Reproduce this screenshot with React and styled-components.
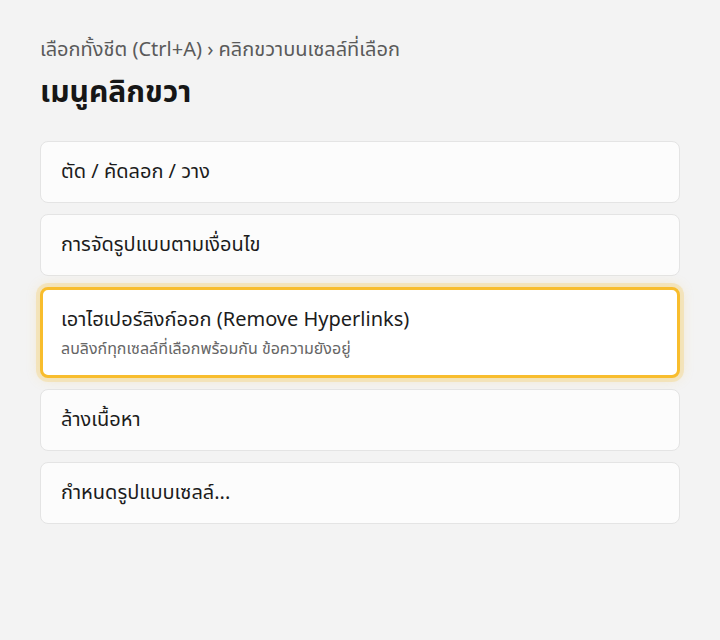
import React from 'react'
import styled, { createGlobalStyle } from 'styled-components'

const GlobalStyle = createGlobalStyle`
  html, body {
    margin: 0;
    padding: 0;
    background: #f3f3f3;
    font-family: 'Noto Sans Thai', 'Noto Sans', sans-serif;
    color: #1c1c1c;
  }
`

const items = [
  { label: 'ตัด / คัดลอก / วาง' },
  { label: 'การจัดรูปแบบตามเงื่อนไข' },
  {
    label: 'เอาไฮเปอร์ลิงก์ออก (Remove Hyperlinks)',
    hint: 'ลบลิงก์ทุกเซลล์ที่เลือกพร้อมกัน ข้อความยังอยู่',
    active: true,
  },
  { label: 'ล้างเนื้อหา' },
  { label: 'กำหนดรูปแบบเซลล์...' },
]

const App = () => {
  return (
    <>
      <GlobalStyle />
      <Page>
        <Crumb>เลือกทั้งชีต (Ctrl+A) › คลิกขวาบนเซลล์ที่เลือก</Crumb>
        <Title>เมนูคลิกขวา</Title>
        <MenuList>
          {items.map((it) => (
            <MenuItem key={it.label} $active={it.active}>
              <ItemLabel>{it.label}</ItemLabel>
              {it.hint && <ItemHint>{it.hint}</ItemHint>}
            </MenuItem>
          ))}
        </MenuList>
      </Page>
    </>
  )
}

const Page = styled.div`
  padding: 36px 40px 40px;
`

const Crumb = styled.div`
  font-size: 20px;
  color: #5a5a5a;
  line-height: 28px;
`

const Title = styled.h1`
  margin: 11px 0 0;
  font-size: 30px;
  font-weight: 700;
  color: #161616;
  line-height: 36px;
`

const MenuList = styled.div`
  display: flex;
  flex-direction: column;
  gap: 11px;
  margin-top: 30px;
`

const MenuItem = styled.div`
  display: flex;
  flex-direction: column;
  justify-content: center;
  gap: 6px;
  min-height: ${(p) => (p.$active ? '85px' : '60px')};
  padding: 0 ${(p) => (p.$active ? '18px' : '20px')};
  background: ${(p) => (p.$active ? '#ffffff' : '#fcfcfc')};
  border: ${(p) => (p.$active ? '3px solid #f8bd2d' : '1px solid #e4e4e4')};
  border-radius: 8px;
  box-shadow: ${(p) =>
    p.$active ? '0 0 0 4px rgba(248, 189, 45, 0.22), 0 0 14px rgba(248, 189, 45, 0.25)' : 'none'};
`

const ItemLabel = styled.div`
  font-size: 20px;
  color: #1c1c1c;
  line-height: 26px;
`

const ItemHint = styled.div`
  font-size: 16px;
  color: #666666;
  line-height: 20px;
`

export default App
